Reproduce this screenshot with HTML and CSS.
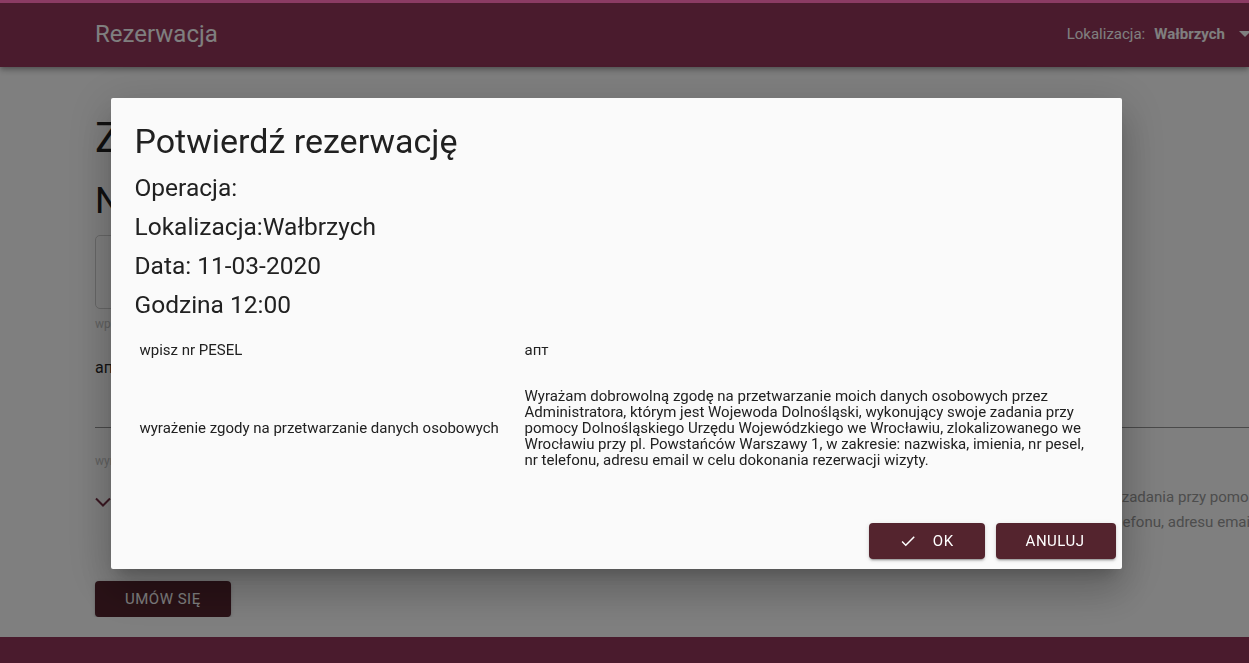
FILE: index.html
```html
<!DOCTYPE html>
<html lang="pl">
<head>
<meta charset="utf-8">
<title>Rezerwacja</title>
<link rel="stylesheet" href="styles.css">
</head>
<body>
<div class="topline"></div>
<header class="toolbar">
  <span class="brand">Rezerwacja</span>
  <div class="loc">
    <span>Lokalizacja:</span>
    <b>Wałbrzych</b>
    <span class="arrow"></span>
  </div>
</header>
<main class="page">
  <h1 class="page-title">Zarezerwuj wizytę</h1>
  <h2 class="page-sub">Nowa rezerwacja</h2>
  <div class="outline-field"></div>
  <div class="hint hint-first">wpisz nr PESEL</div>
  <div class="value">апт</div>
  <div class="underline"></div>
  <div class="hint hint-second">wyrażenie zgody na przetwarzanie danych osobowych</div>
  <div class="panel">
    <svg class="chevron" width="16" height="10" viewBox="0 0 16 10"><path d="M1 1.5 L8 8.5 L15 1.5" fill="none" stroke="#743044" stroke-width="2"/></svg>
    <div class="panel-text">
      <div class="panel-line">Wyrażam dobrowolną zgodę na przetwarzanie moich danych osobowych przez Administratora, którym jest Wojewoda Dolnośląski, wykonujący swoje zadania przy pomocy Dolnośląskiego</div>
      <div class="panel-line">Urzędu Wojewódzkiego we Wrocławiu, zlokalizowanego we Wrocławiu przy pl. Powstańców Warszawy 1, w zakresie: nazwiska, imienia, nr pesel, nr telefonu, adresu email w celu dokonania rezerwacji wizyty.</div>
    </div>
  </div>
  <button class="submit">UMÓW SIĘ</button>
</main>
<footer class="footer"></footer>

<div class="overlay">
  <div class="dialog">
    <h2 class="dialog-title">Potwierdź rezerwację</h2>
    <div class="info">
      <p>Operacja:</p>
      <p>Lokalizacja:Wałbrzych</p>
      <p>Data: 11-03-2020</p>
      <p>Godzina 12:00</p>
    </div>
    <table class="summary">
      <colgroup><col class="col-label"><col></colgroup>
      <tr>
        <td>wpisz nr PESEL</td>
        <td>апт</td>
      </tr>
      <tr>
        <td>wyrażenie zgody na przetwarzanie danych osobowych</td>
        <td><p class="consent">Wyrażam dobrowolną zgodę na przetwarzanie moich danych osobowych przez Administratora, którym jest Wojewoda Dolnośląski, wykonujący swoje zadania przy pomocy Dolnośląskiego Urzędu Wojewódzkiego we Wrocławiu, zlokalizowanego we Wrocławiu przy pl. Powstańców Warszawy 1, w zakresie: nazwiska, imienia, nr pesel, nr telefonu, adresu email w celu dokonania rezerwacji wizyty.</p></td>
      </tr>
    </table>
    <div class="actions">
      <button class="btn btn-ok"><svg class="check" width="18" height="18" viewBox="0 0 24 24"><path d="M9 16.17L4.83 12l-1.42 1.41L9 19 21 7l-1.41-1.41z" fill="#fff"/></svg><span>OK</span></button>
      <button class="btn btn-cancel">ANULUJ</button>
    </div>
  </div>
</div>
</body>
</html>
```

FILE: styles.css
```css
html, body {
  margin: 0;
  height: 663px;
  overflow: hidden;
}
body {
  font-family: Roboto, "Liberation Sans", sans-serif;
  background: #fff;
  color: #212121;
}

.topline {
  position: fixed;
  top: 0;
  left: 0;
  right: 0;
  height: 3px;
  background: #8b3b63;
  z-index: 20;
}

.toolbar {
  height: 67px;
  box-sizing: border-box;
  background: #94365a;
  display: flex;
  align-items: center;
  padding-left: 95px;
  box-shadow: 0 2px 4px -1px rgba(0,0,0,.2), 0 4px 5px 0 rgba(0,0,0,.14), 0 1px 10px 0 rgba(0,0,0,.12);
  position: relative;
  z-index: 1;
}
.brand {
  font-size: 24px;
  color: #fff;
}
.loc {
  margin-left: auto;
  margin-right: -2px;
  display: flex;
  align-items: center;
  font-size: 15px;
  color: #fff;
}
.loc b {
  margin-left: 9px;
  font-size: 15px;
  font-weight: 700;
}
.arrow {
  margin-left: 14px;
  width: 0;
  height: 0;
  border-left: 6px solid transparent;
  border-right: 6px solid transparent;
  border-top: 6px solid #fff;
}

.page {
  padding-left: 95px;
  overflow: hidden;
}
.page-title {
  margin: 47px 0 0;
  font-size: 42px;
  line-height: 48px;
  font-weight: 400;
}
.page-sub {
  margin: 17px 0 0;
  font-size: 36px;
  line-height: 44px;
  font-weight: 400;
}
.outline-field {
  margin-top: 12px;
  width: 900px;
  height: 74px;
  box-sizing: border-box;
  border: 1px solid #d0d0d0;
  border-radius: 5px;
}
.hint {
  font-size: 12px;
  line-height: 16px;
  color: #c4c4c4;
}
.hint-first { margin-top: 7px; }
.hint-second { margin-top: 25px; }
.value {
  margin-top: 26px;
  font-size: 16px;
  line-height: 20px;
  color: #282828;
}
.underline {
  margin-top: 49px;
  height: 1px;
  background: #949494;
}
.panel {
  margin-top: 16px;
  display: flex;
  align-items: flex-start;
}
.chevron {
  margin: 12px 0 0 0;
  flex: none;
}
.panel-text {
  margin-left: 14px;
  font-size: 15.07px;
  line-height: 25px;
  color: #9a9a9a;
  white-space: nowrap;
}
.submit {
  display: block;
  margin-top: 46px;
  height: 36px;
  padding: 0 30px;
  border: 0;
  border-radius: 4px;
  background: #54242e;
  color: #fff;
  font-family: inherit;
  font-size: 15px;
  font-weight: 400;
  letter-spacing: .5px;
  box-shadow: 0 3px 1px -2px rgba(0,0,0,.2), 0 2px 2px 0 rgba(0,0,0,.14), 0 1px 5px 0 rgba(0,0,0,.12);
}
.footer {
  margin-top: 20px;
  height: 40px;
  background: #94365a;
}

.overlay {
  position: fixed;
  inset: 0;
  background: rgba(0,0,0,.5);
  display: flex;
  justify-content: center;
  align-items: flex-start;
  padding: 98px 17px 0 0;
  box-sizing: border-box;
  z-index: 10;
}
.dialog {
  width: 1011px;
  box-sizing: border-box;
  background: #fafafa;
  padding: 23px 6px 10px 24px;
  border-radius: 2px;
  box-shadow: 0 11px 15px -7px rgba(0,0,0,.2), 0 24px 38px 3px rgba(0,0,0,.14), 0 9px 46px 8px rgba(0,0,0,.12);
  color: #212121;
}
.dialog-title {
  margin: 0 0 7px;
  font-size: 34px;
  line-height: 40px;
  font-weight: 400;
}
.info p {
  margin: 0;
  font-size: 24.5px;
  line-height: 39px;
}
.summary {
  margin-top: 10px;
  width: 962px;
  table-layout: fixed;
  border-collapse: collapse;
  font-size: 15px;
  line-height: 16px;
}
.col-label { width: 385px; }
.summary td {
  padding: 8px 4px 8px 5px;
  vertical-align: middle;
}
.consent {
  margin: 14px 0;
}
.actions {
  margin-top: 33px;
  display: flex;
  justify-content: flex-end;
  gap: 11px;
}
.btn {
  height: 36px;
  padding: 0 31px 0 30px;
  border: 0;
  border-radius: 4px;
  background: #54242e;
  color: #fff;
  font-family: inherit;
  font-size: 15px;
  font-weight: 400;
  letter-spacing: .5px;
  display: flex;
  align-items: center;
  box-shadow: 0 3px 1px -2px rgba(0,0,0,.2), 0 2px 2px 0 rgba(0,0,0,.14), 0 1px 5px 0 rgba(0,0,0,.12);
}
.check {
  margin-right: 16px;
}
```
